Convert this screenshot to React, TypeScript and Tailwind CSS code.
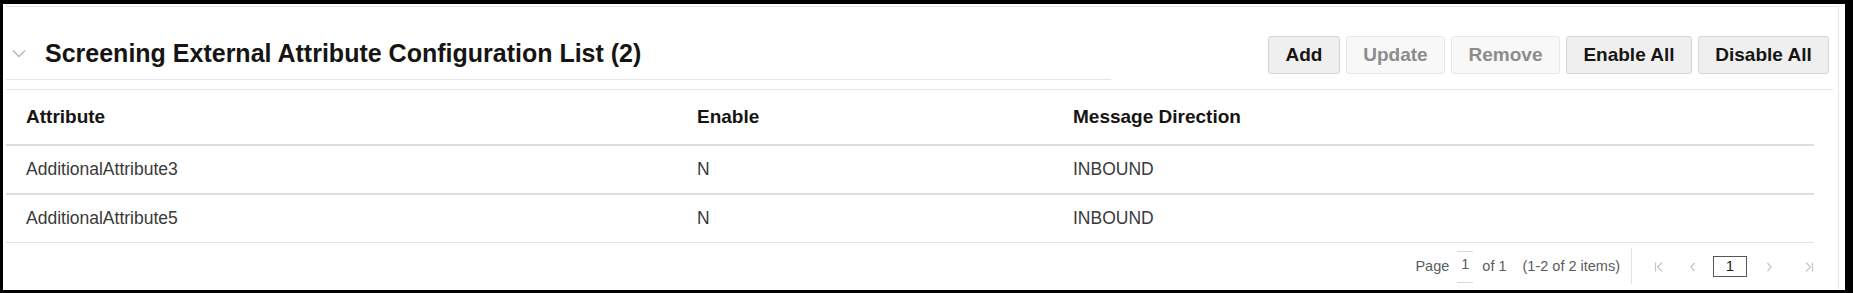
import React from "react";

const rows = [
  { attribute: "AdditionalAttribute3", enable: "N", direction: "INBOUND" },
  { attribute: "AdditionalAttribute5", enable: "N", direction: "INBOUND" },
];

const buttons = [
  { label: "Add", width: "w-[72px]", disabled: false },
  { label: "Update", width: "w-[99px]", disabled: true },
  { label: "Remove", width: "w-[109px]", disabled: true },
  { label: "Enable All", width: "w-[126px]", disabled: false },
  { label: "Disable All", width: "w-[131px]", disabled: false },
];

function Chevron() {
  return (
    <svg width="14" height="9" viewBox="0 0 14 9" fill="none">
      <path d="M1 1.5 L7 7.5 L13 1.5" stroke="#b5b5b5" strokeWidth="1.4" />
    </svg>
  );
}

function PagerIcon({ kind }: { kind: "first" | "prev" | "next" | "last" }) {
  return (
    <svg width="10" height="10" viewBox="0 0 10 10" fill="none">
      {kind === "first" && (
        <>
          <path d="M1.5 0.5 V9.5" stroke="#c4c4c4" strokeWidth="1.2" />
          <path d="M8 0.5 L3.5 5 L8 9.5" stroke="#c4c4c4" strokeWidth="1.2" />
        </>
      )}
      {kind === "prev" && <path d="M6.5 1 L3 5 L6.5 9" stroke="#c4c4c4" strokeWidth="1.2" />}
      {kind === "next" && <path d="M3.5 1 L7 5 L3.5 9" stroke="#c4c4c4" strokeWidth="1.2" />}
      {kind === "last" && (
        <>
          <path d="M2 0.5 L6.5 5 L2 9.5" stroke="#c4c4c4" strokeWidth="1.2" />
          <path d="M8.5 0.5 V9.5" stroke="#c4c4c4" strokeWidth="1.2" />
        </>
      )}
    </svg>
  );
}

export default function App() {
  return (
    <div className="w-[1853px] h-[293px] bg-white border-black border-t-4 border-l-[3px] border-r-[8px] border-b-[3px] overflow-hidden font-['Liberation_Sans',Arial,sans-serif]">
      <div className="h-full pt-[2px] pl-[3px] pr-[6px]">
        <div className="h-full border-t border-r border-[#e6e6e6] flex flex-col">
          {/* Header */}
          <div className="h-[83px] flex items-start border-b border-[#e6e6e6] mr-[5px]">
            <div className="w-[1105px] h-[73px] border-b border-[#e6e6e6] flex items-center pt-[20px] pl-[6px]">
              <Chevron />
              <h1 className="ml-[19px] text-[25px] font-bold text-[#161513] leading-none">
                Screening External Attribute Configuration List (2)
              </h1>
            </div>
            <div className="flex-1 flex justify-end gap-[6px] mt-[29px] pr-[4px]">
              {buttons.map((b) => (
                <button
                  key={b.label}
                  className={`${b.width} h-[38px] rounded-[3px] border text-[19px] font-bold ${
                    b.disabled
                      ? "bg-[#f8f8f8] border-[#e8e8e8] text-[#8c8c8c]"
                      : "bg-[#efefef] border-[#d6d6d6] text-[#161513]"
                  }`}
                >
                  {b.label}
                </button>
              ))}
            </div>
          </div>

          {/* Table */}
          <div className="w-[1808px]">
            <div className="grid grid-cols-[671px_376px_1fr] h-[56px] items-center border-b-2 border-[#dedede] text-[19px] font-bold text-[#161513]">
              <div className="pl-[20px]">Attribute</div>
              <div className="pl-[20px]">Enable</div>
              <div className="pl-[20px]">Message Direction</div>
            </div>
            {rows.map((r, i) => (
              <div
                key={r.attribute}
                className={`grid grid-cols-[671px_376px_1fr] items-center text-[17.5px] text-[#3a3a3a] ${
                  i === 0 ? "h-[49px] border-b-2 border-[#dedede]" : "h-[48px] border-b border-[#e3e3e3]"
                }`}
              >
                <div className="pl-[20px]">{r.attribute}</div>
                <div className="pl-[20px]">{r.enable}</div>
                <div className="pl-[20px]">{r.direction}</div>
              </div>
            ))}

            {/* Pagination */}
            <div className="h-[47px] flex items-center justify-end text-[14.5px] text-[#5c5c5c]">
              <span>Page</span>
              <span className="ml-[8px] w-[16px] h-[32px] border-t border-b border-[#d9d9d9] flex items-end justify-center pb-[6px] text-[#5c5c5c]">
                1
              </span>
              <span className="ml-[9px]">of 1</span>
              <span className="ml-[16px]">(1-2 of 2 items)</span>
              <div className="ml-[11px] self-start mt-[5px] h-[36px] border-l border-[#e3e3e3]" />
              <div className="ml-[22px] flex items-center">
                <PagerIcon kind="first" />
                <span className="ml-[24px]"><PagerIcon kind="prev" /></span>
                <span className="ml-[15px] w-[34px] h-[21px] border border-[#555555] flex items-center justify-center text-[15px] text-[#222222]">
                  1
                </span>
                <span className="ml-[17px]"><PagerIcon kind="next" /></span>
                <span className="ml-[30px]"><PagerIcon kind="last" /></span>
              </div>
            </div>
          </div>
        </div>
      </div>
    </div>
  );
}
